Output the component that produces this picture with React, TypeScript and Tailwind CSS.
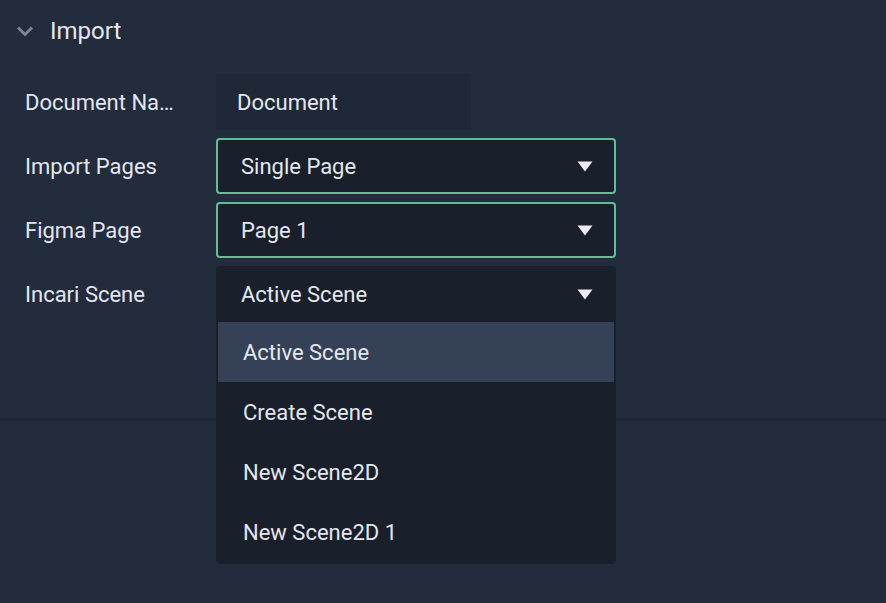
import React from 'react';

const font = { fontFamily: 'Roboto, "Noto Sans", sans-serif' };

const Caret = () => (
  <svg width="16" height="11" viewBox="0 0 16 11" className="shrink-0">
    <path d="M0.5 0.5 H15.5 L8 10.5 Z" fill="#ecebf3" />
  </svg>
);

const Row = ({ label, children }: { label: string; children: React.ReactNode }) => (
  <div className="flex items-center h-[56px]">
    <div className="w-[216px] shrink-0 pl-[25px] pr-[40px] truncate text-[22px] text-[#e4e7ee]">{label}</div>
    {children}
  </div>
);

const SelectBox = ({ value, active }: { value: string; active?: boolean }) => (
  <div
    className={`w-[400px] h-[56px] flex items-center justify-between bg-[#1a202b] text-[22px] text-[#e4e7ee] ${
      active ? 'border-2 border-[#62bd97] rounded-[4px] pl-[23px] pr-[21px]' : 'rounded-t-[4px] pl-[25px] pr-[23px]'
    }`}
  >
    <span>{value}</span>
    <Caret />
  </div>
);

const options = ['Active Scene', 'Create Scene', 'New Scene2D', 'New Scene2D 1'];

export default function App() {
  return (
    <div className="w-[886px] h-[603px] bg-[#222c3d] overflow-hidden" style={font}>
      <div className="border-b-[3px] border-[#1c2533] pb-[96px]">
        <div className="flex items-center h-[62px] pl-[16px] gap-[16px]">
          <svg width="18" height="12" viewBox="0 0 18 12">
            <path d="M2 2.5 L9 9.5 L16 2.5" stroke="#7c8592" strokeWidth="3" fill="none" />
          </svg>
          <span className="text-[24px] text-[#e4e7ee]">Import</span>
        </div>
        <div className="flex flex-col gap-[8px] pt-[12px]">
          <Row label="Document Name">
            <div className="w-[255px] h-[56px] flex items-center pl-[21px] bg-[#1f2837] text-[22px] text-[#e4e7ee]">
              Document
            </div>
          </Row>
          <Row label="Import Pages">
            <SelectBox value="Single Page" active />
          </Row>
          <Row label="Figma Page">
            <SelectBox value="Page 1" active />
          </Row>
          <Row label="Incari Scene">
            <div className="relative">
              <SelectBox value="Active Scene" />
              <div className="absolute left-0 top-[56px] w-[400px] bg-[#1a202b] px-[2px] pb-[2px] rounded-b-[4px] z-10">
                {options.map((o, i) => (
                  <div
                    key={o}
                    className={`h-[60px] flex items-center pl-[25px] text-[22px] text-[#e4e7ee] ${
                      i === 0 ? 'bg-[#354157]' : ''
                    }`}
                  >
                    {o}
                  </div>
                ))}
              </div>
            </div>
          </Row>
        </div>
      </div>
    </div>
  );
}
